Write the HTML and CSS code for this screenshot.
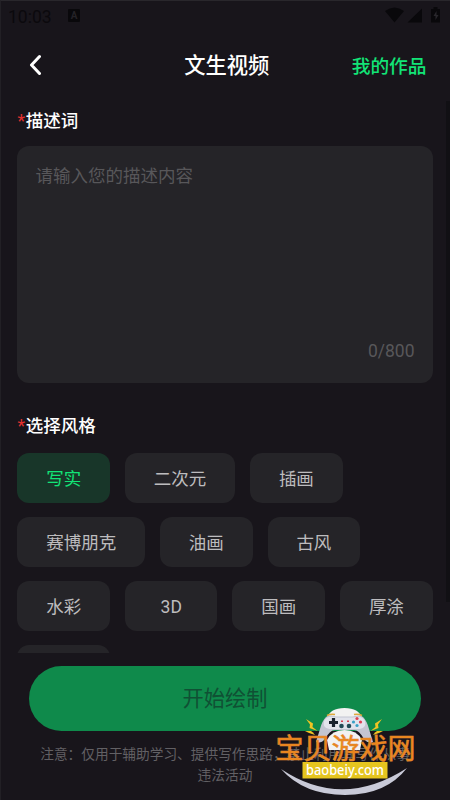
FILE: index.html
```html
<!DOCTYPE html>
<html lang="zh-CN">
<head>
<meta charset="utf-8">
<title>文生视频</title>
<link rel="stylesheet" href="styles.css">
</head>
<body>
<div class="screen">
  <div class="status">
    <span class="time">10:03</span>
    <span class="badge">A</span>
    <svg class="signals" width="58" height="18" viewBox="0 0 58 18">
      <path d="M0 4Q9.500-3 19 4L9.500 15.500Z"/>
      <path d="M22.500 15.500H37V1.500Z"/>
      <path d="M46 2h2.500V0h4v2H55v13.500h-9Z"/>
      <path class="bolt" d="M51.500 4l-3 5h2v4l3-5h-2Z"/>
    </svg>
  </div>
  <header class="nav">
    <svg class="back" width="14" height="22" viewBox="0 0 14 22"><path d="M12.500 2.500L4.500 11l8 8.500"/></svg>
    <h1>文生视频</h1>
    <a class="works">我的作品</a>
  </header>
  <main class="content">
    <h2><span class="star">*</span>描述词</h2>
    <div class="prompt">
      <span>请输入您的描述内容</span>
      <span class="count">0/800</span>
    </div>
    <h2 class="style-title"><span class="star">*</span>选择风格</h2>
    <div class="chips">
      <span class="chip active">写实</span><span class="chip">二次元</span><span class="chip">插画</span>
      <span class="chip">赛博朋克</span><span class="chip">油画</span><span class="chip">古风</span>
      <span class="chip">水彩</span><span class="chip">3D</span><span class="chip">国画</span><span class="chip">厚涂</span>
      <span class="chip"></span>
    </div>
    <i class="scrollbar"></i>
  </main>
  <footer>
    <div class="start">开始绘制</div>
    <p class="note">注意：仅用于辅助学习、提供写作思路，禁止利用其写作从事<br>违法活动</p>
  </footer>
  <svg class="brand" width="160" height="100" viewBox="0 0 160 100">
    <path class="smile" d="M11 69Q72 110 137 68Q116 95 75 95Q34 95 11 69Z"/>
    <g class="sparks">
      <path d="M36 19l7 4.500-.5 3.500 5 4-8-3 .5-3.500z"/><path d="M112 19l-7 4.500.5 3.500-5 4 8-3-.5-3.500z"/>
      <path d="M35 31l6 0 2 1.500 2 2.500-6-2z"/><path d="M113 31l-6 0-2 1.500-2 2.500 6-2z"/>
    </g>
    <path class="pad-top" d="M57 18Q60 8 74.500 8Q89 8 92 18Z"/>
    <path class="pad" d="M56 17Q60 14.500 66 16.500H83Q89 14.500 93 17Q97 21 99 29L103 42Q98 44 94 39Q89 30 84 30H65Q60 30 55 39Q51 44 46 42L50 29Q52 21 56 17Z"/>
    <path class="pad-face" d="M54 21Q57 15 66 17.500H83Q92 15 95 21Q97 29 87 29H62Q52 29 54 21Z"/>
    <path class="pad-top" d="M57 40Q62 30 74.500 30Q87 30 92 40L90 50H59Z"/>
    <path class="dpad" d="M63.500 18v9M59 22.500h9"/>
    <g class="dots"><circle class="red" cx="87" cy="18.500" r="1.600"/><circle cx="83.500" cy="22" r="1.600"/><circle class="red" cx="90.500" cy="22" r="1.600"/><circle cx="87" cy="25.500" r="1.600"/></g>
    <g class="sticks"><circle cx="71.500" cy="26" r="2.300"/><circle cx="79" cy="26" r="2.300"/></g>
    <path class="red" d="M71 20.500h2v1.500h-2zM77 20.500h2v1.500h-2z"/>
    <path class="mark" d="M57 15.500q4-2 8-1M84 14.500q4-1 8 1"/>
    <text class="brand-name" x="5.500" y="58.500" textLength="140">宝贝游戏网</text>
    <rect class="label" x="32.500" y="62" width="85" height="16.500"/>
    <text class="domain" x="36" y="75" textLength="78" lengthAdjust="spacingAndGlyphs">baobeiy.com</text>
  </svg>
</div>
</body>
</html>
```
FILE: styles.css
```css
* { box-sizing: border-box; }
body { margin: 0; background: #18151b; font-family: Roboto, "Noto Sans CJK SC", sans-serif; }
.screen { position: relative; width: 450px; height: 800px; overflow: hidden; display: flex; flex-direction: column; border-top: 1px solid #29272c; border-left: 1px solid #222025; background: #18151b; }
.status { height: 31px; flex: none; display: flex; align-items: center; padding: 0 7px; color: #0b090d; }
.time { font-size: 17.5px; width: 44px; line-height: 20px; }
.badge { width: 12px; height: 13px; margin-left: 16px; margin-top: -2px; background: #09080b; color: #242227; font-size: 10px; font-weight: 700; line-height: 13px; text-align: center; border-radius: 1px; }
.signals { margin-left: auto; margin-top: -1px; fill: #09080b; }
.bolt { fill: #29272c; }
.nav { height: 66px; flex: none; display: grid; grid-template-columns: 110px 1fr 110px; align-items: center; padding: 0 23.500px 0 26px; }
.back { fill: none; stroke: #fff; stroke-width: 3; stroke-linecap: round; stroke-linejoin: round; }
h1 { margin: 2px 0 0; color: #fff; font-size: 21.3px; line-height: 30px; font-weight: 500; text-align: center; white-space: nowrap; }
.works { margin-top: -1px; color: #12e477; font-size: 18.7px; font-weight: 500; text-align: right; white-space: nowrap; }
.content { position: relative; height: 555px; flex: none; overflow: hidden; padding: 10px 17px 0 16.400px; }
h2 { margin: 0; color: #fff; font-size: 17.5px; line-height: 26px; font-weight: 500; }
.star { color: #e3302f; display: inline-block; width: 8.300px; font-weight: 400; }
.prompt { margin-top: 12.400px; height: 237px; border-radius: 12px; background: #252428; color: #58575a; font-size: 17.5px; line-height: 26px; padding: 16.600px 18.500px 19px 18px; display: flex; flex-direction: column; justify-content: space-between; }
.count { align-self: flex-end; }
.style-title { margin-top: 29.600px; }
.chips { display: flex; flex-wrap: wrap; gap: 13.900px 15px; margin-top: 14.500px; margin-right: -1px; }
.chip { min-width: 92.500px; height: 50px; padding: 0 28.800px; border-radius: 12px; background: #252428; color: #bdbcbe; font-size: 17.5px; line-height: 52px; text-align: center; white-space: nowrap; }
.active { background: #183629; color: #12e477; }
.scrollbar { position: absolute; right: 0; top: 3px; width: 4px; height: 501px; background: #111014; }
footer { padding: 13.400px 29px 0 28px; }
.start { height: 65px; border-radius: 33px; background: #0f8a4b; color: #105034; font-size: 21.2px; line-height: 66px; text-align: center; }
.note { margin: 13px 0 0; color: #626064; font-size: 13.7px; line-height: 20.5px; text-align: center; white-space: nowrap; }
.brand { position: absolute; left: 269px; top: 699px; }
.smile { fill: #c9cad8; }
.sparks { fill: #f0c323; }
.pad-top { fill: #f2f2f2; }
.pad { fill: #c3c5d2; }
.pad-face { fill: #e2e3ec; }
.dpad { stroke: #19202d; stroke-width: 3.2; }
.dots { fill: #39a0c6; }
.red { fill: #dc4053; }
.sticks { fill: #234b57; }
.mark { stroke: #dda83c; stroke-width: 1.5; fill: none; }
.brand-name { font-family: "Noto Sans CJK SC", sans-serif; font-size: 28px; font-weight: 400; fill: #ee8519; stroke: #e08a35; stroke-width: .6px; }
.label { fill: #e5c51f; }
.domain { font-family: "Noto Sans", sans-serif; font-size: 14.5px; font-weight: 500; fill: #fff; }
```
